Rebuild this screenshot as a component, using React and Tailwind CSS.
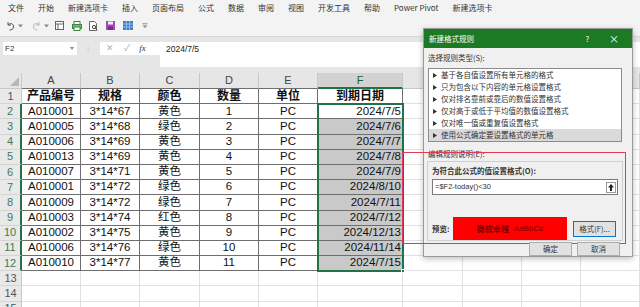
import React from 'react';

const tabs = ['文件', '开始', '新建选项卡', '插入', '页面布局', '公式', '数据', '审阅', '视图', '开发工具', '帮助', 'Power Pivot', '新建选项卡'];

const W = ['w-[22px]', 'w-[59px]', 'w-[59px]', 'w-[60px]', 'w-[59px]', 'w-[59px]', 'w-[85px]', 'w-[60px]', 'w-[59px]', 'w-[59px]', 'w-[59px]'];
const letters = ['A', 'B', 'C', 'D', 'E', 'F', 'G', 'H', 'I', 'J'];

const data = [
    ['A010001', '3*14*67', '黄色', 1, 'PC', '2024/7/5'],
    ['A010005', '3*14*68', '绿色', 2, 'PC', '2024/7/6'],
    ['A010006', '3*14*69', '黄色', 3, 'PC', '2024/7/7'],
    ['A010013', '3*14*69', '黄色', 4, 'PC', '2024/7/8'],
    ['A010007', '3*14*71', '黄色', 5, 'PC', '2024/7/9'],
    ['A010001', '3*14*72', '绿色', 6, 'PC', '2024/8/10'],
    ['A010009', '3*14*72', '绿色', 7, 'PC', '2024/7/11'],
    ['A010003', '3*14*74', '红色', 8, 'PC', '2024/7/12'],
    ['A010002', '3*14*75', '黄色', 9, 'PC', '2024/12/13'],
    ['A010006', '3*14*76', '绿色', 10, 'PC', '2024/11/14'],
    ['A010010', '3*14*77', '黄色', 11, 'PC', '2024/7/15'],
];

const ruleTypes = [
    '基于各自值设置所有单元格的格式',
    '只为包含以下内容的单元格设置格式',
    '仅对排名靠前或靠后的数值设置格式',
    '仅对高于或低于平均值的数值设置格式',
    '仅对唯一值或重复值设置格式',
    '使用公式确定要设置格式的单元格',
];

const Caret = () => (
    <svg width="5" height="4" viewBox="0 0 5 4"><path d="M0 0.5h5L2.5 3.5z" fill="#8a8a8a" /></svg>
);

const QuickBar = () => (
    <div className="flex items-center h-[21px] pl-[6px]">
        {/* undo */}
        <svg width="9" height="10" viewBox="0 0 9 10">
            <path d="M2 1v3h3" stroke="#555" strokeWidth="1" fill="none" />
            <path d="M2 4c1.5-2 5-2 5.5 1s-2 4-4 4" stroke="#555" strokeWidth="1" fill="none" />
        </svg>
        <span className="ml-[3px]"><Caret /></span>
        {/* redo */}
        <svg className="ml-[9px]" width="9" height="10" viewBox="0 0 9 10">
            <path d="M7 1v3H4" stroke="#b5b5b5" strokeWidth="1" fill="none" />
            <path d="M7 4C5.5 2 2 2 1.5 5s2 4 4 4" stroke="#b5b5b5" strokeWidth="1" fill="none" />
        </svg>
        <span className="ml-[3px]"><Caret /></span>
        {/* form */}
        <svg className="ml-[6px]" width="9" height="9" viewBox="0 0 9 9">
            <rect x="0.5" y="0.5" width="8" height="8" fill="#fff" stroke="#666" />
            <path d="M0.5 3h8M3 3v5.5" stroke="#666" />
        </svg>
        {/* print preview */}
        <svg className="ml-[8px]" width="10" height="10" viewBox="0 0 10 10">
            <rect x="2" y="0.5" width="6" height="3" fill="#fff" stroke="#3c8a3c" />
            <rect x="0.5" y="3.5" width="9" height="4" fill="#7ab87a" stroke="#3c8a3c" />
            <rect x="2" y="6" width="6" height="3.5" fill="#fff" stroke="#3c8a3c" />
        </svg>
        {/* doc preview */}
        <svg className="ml-[7px]" width="9" height="10" viewBox="0 0 9 10">
            <path d="M0.5 0.5h5l2 2v7h-7z" fill="#fff" stroke="#666" />
            <circle cx="5" cy="6" r="1.6" fill="none" stroke="#444" />
            <path d="M6.2 7.2l2 2" stroke="#444" />
        </svg>
        {/* save */}
        <svg className="ml-[8px]" width="9" height="9" viewBox="0 0 9 9">
            <rect x="0" y="0" width="9" height="9" fill="#a44bb8" />
            <rect x="2" y="0.5" width="5" height="3" fill="#f2e6f5" />
            <rect x="2" y="5.5" width="5" height="3.5" fill="#7a2b8c" />
        </svg>
        {/* grid */}
        <svg className="ml-[8px]" width="10" height="9" viewBox="0 0 10 9">
            <rect x="0" y="0" width="10" height="9" fill="#3d7cc9" />
            <path d="M0 3h10M0 6h10M3.3 0v9M6.6 0v9" stroke="#a9c8ee" strokeWidth="0.8" />
        </svg>
        <svg className="ml-[9px]" width="6" height="6" viewBox="0 0 6 6">
            <path d="M0.5 0.8h5" stroke="#8a8a8a" />
            <path d="M0.5 2.5h5L3 5z" fill="#8a8a8a" />
        </svg>
    </div>
);

const ColumnHeader = () => (
    <div className="flex h-[16px] bg-[#e6e6e6] text-[11px] text-[#444]">
        <div className={`${W[0]} shrink-0 border-r border-b border-[#c8c8c8] flex items-end justify-end p-[2px]`}>
            <svg width="9" height="9" viewBox="0 0 9 9"><path d="M9 0v9H0z" fill="#b8b8b8" /></svg>
        </div>
        {letters.map((l, i) => {
            const sel = l === 'F';
            return (
                <div
                    key={l}
                    className={`${W[i + 1]} shrink-0 flex items-center justify-center border-r border-[#c8c8c8] ${
                        sel ? 'bg-[#d2d2d2] border-b-2 border-b-[#217346] text-[#1e5c38]' : i < 6 ? 'border-b border-b-[#6e6e6e]' : 'border-b border-b-[#c8c8c8]'
                    }`}
                >
                    {l}
                </div>
            );
        })}
    </div>
);

const Row = ({ n, cells }) => {
    const inTable = n <= 12;
    const selRow = n >= 2 && n <= 12;
    return (
        <div className="flex h-[15.2px]">
            <div
                className={`${W[0]} shrink-0 flex items-center justify-center text-[11px] leading-none border-b border-[#d4d4d4] bg-[#e9e9e9] ${
                    selRow ? 'text-[#3f7a55] border-r-2 border-r-[#217346]' : 'text-[#555] border-r border-r-[#c8c8c8]'
                }`}
            >
                {n}
            </div>
            {letters.map((l, i) => {
                const tableCell = inTable && i < 6;
                const isHead = n === 1 && i < 6;
                const grey = l === 'F' && n >= 3 && n <= 12;
                const v = cells ? cells[i] : null;
                return (
                    <div
                        key={l}
                        className={`${W[i + 1]} shrink-0 flex items-center leading-none border-r border-b overflow-hidden whitespace-nowrap ${
                            tableCell ? 'border-[#6e6e6e]' : 'border-[#e1e1e1]'
                        } ${grey ? 'bg-[#c9c9c9]' : ''} ${
                            i === 5 && !isHead ? 'justify-end pr-[1px]' : 'justify-center'
                        } ${isHead ? 'font-bold text-[12px]' : 'text-[11.5px]'} text-[#111]`}
                    >
                        {v}
                    </div>
                );
            })}
        </div>
    );
};

const Dialog = () => (
    <div className="absolute left-[423px] top-[28px] w-[210px] h-[229px] bg-[#f0f0f0] border border-[#9a9a9a] shadow-[0_2px_6px_rgba(0,0,0,0.25)] text-[7.5px] leading-none text-[#333] font-['Noto_Sans_CJK_SC',sans-serif] flex flex-col">
        <div className="h-[19px] bg-[#1d7a24] text-white flex items-center px-[5px] shrink-0">
            <span className="flex-1">新建格式规则</span>
            <span className="mr-[20px]">?</span>
            <span className="mr-[8px] text-[10px]">×</span>
        </div>
        <div className="px-[4px] pt-[4px] flex flex-col">
            <div className="h-[12px] flex items-center">选择规则类型(S):</div>
            <div className="mt-[4px] w-[194px] h-[74px] bg-white border border-[#8c8c8c] flex flex-col">
                {ruleTypes.map((t, i) => (
                    <div key={t} className={`h-[12px] flex items-center pl-[4px] ${i === 5 ? 'bg-[#dadada]' : ''}`}>
                        <svg className="mr-[4px] shrink-0" width="4" height="5" viewBox="0 0 4 5"><path d="M0 0l4 2.5L0 5z" fill="#333" /></svg>
                        <span>{t}</span>
                    </div>
                ))}
            </div>
            <div className="mt-[6px] h-[12px] flex items-center">编辑规则说明(E):</div>
            <div className="mt-[1px] -ml-[1px] w-[196px] h-[80px] border border-[#d0d0d0] flex flex-col px-[4px] pt-[3px]">
                <div className="h-[12px] flex items-center font-bold">为符合此公式的值设置格式(O):</div>
                <div className="mt-[2px] h-[16px] bg-white border border-[#7a7a7a] flex items-center pl-[2px] pr-[1px]">
                    <span className="flex-1 font-['Liberation_Sans',sans-serif]">=$F2-today()&lt;30</span>
                    <span className="w-[10px] h-[11px] border border-[#9a9a9a] bg-white flex items-center justify-center">
                        <svg width="6" height="7" viewBox="0 0 6 7"><path d="M3 0L6 3.5H4V7H2V3.5H0z" fill="#222" /></svg>
                    </span>
                </div>
                <div className="mt-[22px] flex items-center">
                    <span className="font-bold w-[21px]">预览:</span>
                    <div className="w-[114px] h-[23px] bg-[#ff0000] flex items-center justify-center text-[#7a0000] text-[8px] font-bold">
                        微软卓越 <span className="ml-[5px] font-normal font-['Liberation_Sans',sans-serif]">AaBbCc</span>
                    </div>
                    <div className="ml-[6px] w-[43px] h-[16px] bg-[#e1e1e1] border border-[#0078d7] flex items-center justify-center">格式(F)...</div>
                </div>
            </div>
            <div className="relative z-20 mt-[1px] flex justify-end gap-[5px] pr-[8px]">
                <div className="w-[43px] h-[14px] bg-[#e1e1e1] border border-[#adadad] flex items-center justify-center">确定</div>
                <div className="w-[43px] h-[14px] bg-[#e1e1e1] border border-[#adadad] flex items-center justify-center">取消</div>
            </div>
        </div>
    </div>
);

export default function App() {
    return (
        <div className="relative w-[640px] h-[307px] overflow-hidden bg-white font-['Liberation_Sans','Noto_Sans_CJK_SC',sans-serif]">
            <div className="bg-[#f3f3f3]">
                <div className="flex items-center h-[15px] pl-[8px] gap-[14px] text-[8px] text-[#333] font-['Noto_Sans_CJK_SC',sans-serif]">
                    {tabs.map((t, i) => (
                        <span key={i}>{t}</span>
                    ))}
                </div>
                <QuickBar />
            </div>
            <div className="flex h-[37px] bg-[#e6e6e6] border-t border-[#d8d8d8] pt-[5px]">
                <div className="w-[160px] shrink-0 flex items-start">
                    <div className="ml-[3px] w-[74px] h-[13px] bg-white flex items-center pl-[2px] pr-[3px] text-[8px] text-[#333]">
                        <span className="flex-1">F2</span>
                        <svg width="4" height="3" viewBox="0 0 4 3"><path d="M0 0h4L2 3z" fill="#888" /></svg>
                    </div>
                    <div className="ml-[7px] h-[13px] flex items-center text-[#bbb] text-[8px]">⋮</div>
                    <div className="ml-[8px] w-[60px] h-[13px] bg-white flex items-center text-[9px]">
                        <span className="ml-[6px] text-[#b0b0b0]">✕</span>
                        <span className="ml-[10px] text-[#b0b0b0]">✓</span>
                        <span className="ml-[9px] italic font-['Liberation_Serif',serif] text-[#333]">fx</span>
                    </div>
                </div>
                <div className="flex-1 h-[25px] bg-white pl-[6px] pt-[1px] text-[8.5px] text-[#222]">2024/7/5</div>
            </div>
            <div className="relative">
                <ColumnHeader />
                {Array.from({ length: 15 }).map((_, idx) => {
                    const n = idx + 1;
                    let cells = null;
                    if (n === 1) cells = ['产品编号', '规格', '颜色', '数量', '单位', '到期日期'];
                    else if (n <= 12) cells = data[n - 2];
                    return <Row key={n} n={n} cells={cells} />;
                })}
                {/* selection F2:F12 */}
                <div className="absolute left-[317px] top-[30px] w-[87px] h-[169px] border-2 border-[#217346] pointer-events-none">
                    <div className="absolute -right-[3px] -bottom-[3px] w-[4px] h-[4px] bg-[#217346] border border-white"></div>
                </div>
            </div>
            <Dialog />
            {/* annotation */}
            <div className="absolute z-10 left-[402px] top-[152px] w-[224px] h-[92px] border border-[#de3c55] pointer-events-none"></div>
        </div>
    );
}
